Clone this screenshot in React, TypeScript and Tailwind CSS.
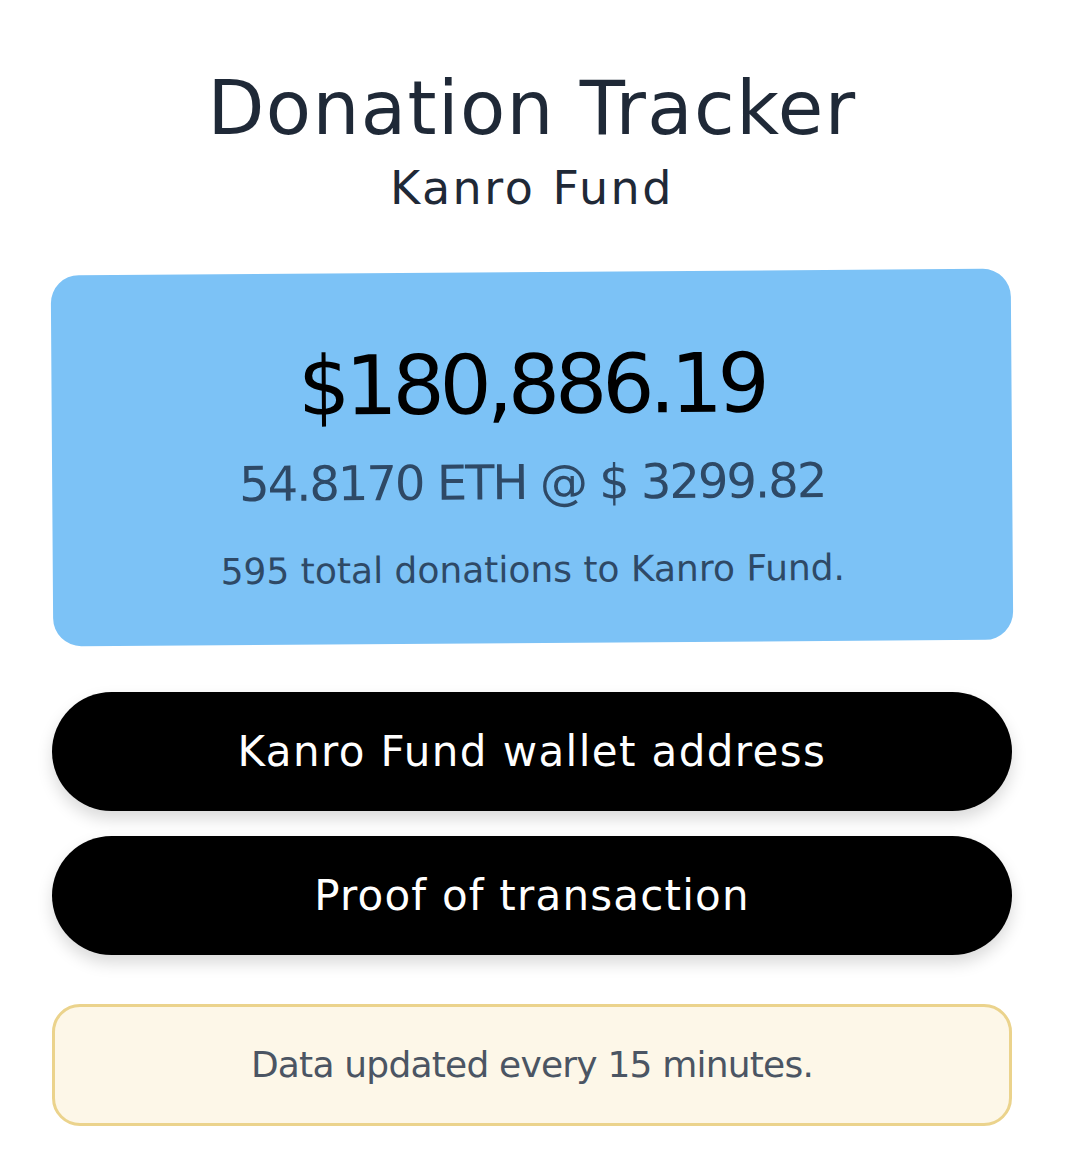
const font = "font-['DejaVu_Sans','Liberation_Sans',sans-serif]";

export default function App() {
  return (
    <div className={`min-h-[1175px] bg-white pl-[52px] pr-[56px] pt-[66px] ${font}`}>
      <header className="flex flex-col items-center text-[#1f2937]">
        <h1 className="text-[74px] leading-[84px] tracking-[1.4px]">Donation Tracker</h1>
        <p className="mt-[10px] text-[46px] leading-[56px] tracking-[2.5px]">Kanro Fund</p>
      </header>

      <section className="mt-[56px] flex h-[371px] rotate-[-0.4deg] flex-col items-center rounded-[28px] bg-[#7cc2f6] pt-[63px]">
        <p className="text-[82px] leading-[100px] tracking-[-5px] text-black">$180,886.19</p>
        <p className="mt-[19px] text-[48px] leading-[56px] tracking-[-2px] text-[#2e4966]">
          54.8170 ETH @ $ 3299.82
        </p>
        <p className="mt-[38px] text-[36px] leading-[44px] text-[#2e4966]">595 total donations to Kanro Fund.</p>
      </section>

      <div className="mt-[49px] flex flex-col gap-[25px]">
        <button className="h-[119px] rounded-full bg-black text-[42px] tracking-[1.4px] text-white shadow-[0_8px_16px_rgba(0,0,0,0.15)]">
          Kanro Fund wallet address
        </button>
        <button className="h-[119px] rounded-full bg-black text-[42px] tracking-[1.2px] text-white shadow-[0_8px_16px_rgba(0,0,0,0.15)]">
          Proof of transaction
        </button>
      </div>

      <div className="mt-[49px] flex h-[122px] items-center justify-center rounded-[28px] border-[3px] border-[#ebd38c] bg-[#fdf7e8]">
        <p className="text-[36px] tracking-[-0.8px] text-[#4b5563]">Data updated every 15 minutes.</p>
      </div>
    </div>
  );
}
